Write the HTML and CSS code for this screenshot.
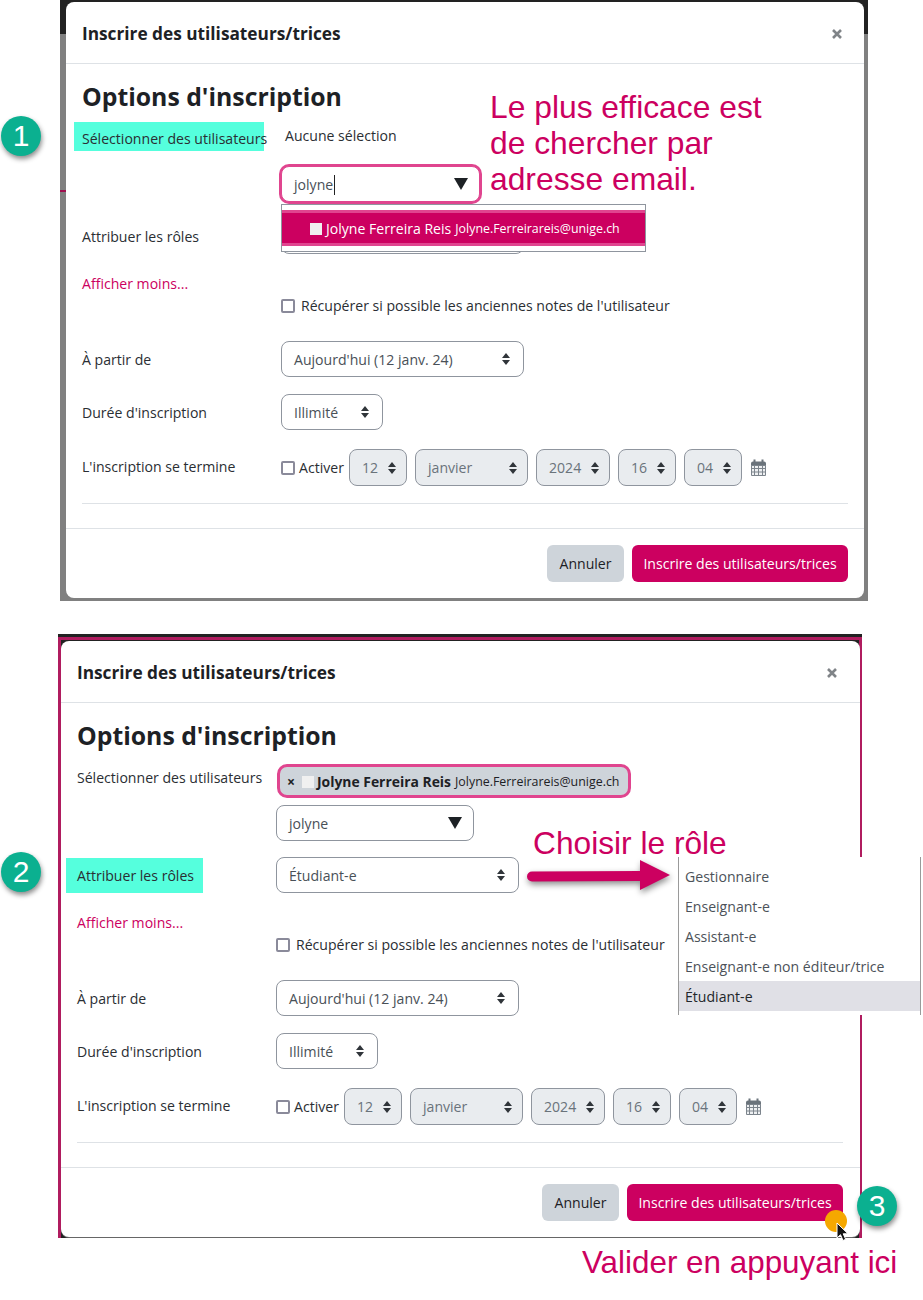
FILE: index.html
```html
<!DOCTYPE html>
<html lang="fr">
<head>
<meta charset="utf-8">
<title>Inscrire des utilisateurs/trices</title>
<link rel="stylesheet" href="styles.css">
</head>
<body>
<main class="page">
  <section class="panel panel-one">
    <div class="modal">
      <header class="modal-head">
        <h1>Inscrire des utilisateurs/trices</h1>
        <svg class="close" viewBox="0 0 10 10"><path d="M1 1 9 9M9 1 1 9"/></svg>
      </header>
      <div class="modal-body">
        <h2>Options d'inscription</h2>
        <div class="row row-users">
          <div class="label"><span class="hl hl-users">Sélectionner des utilisateurs</span></div>
          <div class="ctrl users-ctrl">
            <div class="users-top"><span class="none">Aucune sélection</span></div>
            <div class="search focus"><span>jolyne</span><i class="text-cursor"></i><i class="tri"></i></div>
          </div>
        </div>
        <div class="row row-role">
          <div class="label">Attribuer les rôles</div>
          <div class="ctrl rel">
            <div class="sel w-role"></div>
            <div class="suggest">
              <div class="suggest-item"><i class="avatar"></i><span class="name">Jolyne Ferreira Reis</span> <span class="mail">Jolyne.Ferreirareis@unige.ch</span></div>
            </div>
          </div>
        </div>
        <div class="row row-more">
          <div class="label"><a class="more">Afficher moins...</a></div>
          <div class="ctrl"></div>
        </div>
        <div class="row row-check">
          <div class="label"></div>
          <label class="ctrl check-line"><input type="checkbox">Récupérer si possible les anciennes notes de l'utilisateur</label>
        </div>
        <div class="row row-from">
          <div class="label">À partir de</div>
          <div class="ctrl"><div class="sel w-role"><span>Aujourd'hui (12 janv. 24)</span><svg class="ud" viewBox="0 0 8 12"><path d="M4 0 8 5H0ZM4 12 0 7H8Z"/></svg></div></div>
        </div>
        <div class="row row-dur">
          <div class="label">Durée d'inscription</div>
          <div class="ctrl"><div class="sel w-dur"><span>Illimité</span><svg class="ud" viewBox="0 0 8 12"><path d="M4 0 8 5H0ZM4 12 0 7H8Z"/></svg></div></div>
        </div>
        <div class="row row-end">
          <div class="label">L'inscription se termine</div>
          <div class="ctrl date-line">
            <label class="activate"><input type="checkbox">Activer</label>
            <div class="sel off w-n"><span>12</span><svg class="ud" viewBox="0 0 8 12"><path d="M4 0 8 5H0ZM4 12 0 7H8Z"/></svg></div>
            <div class="sel off w-m"><span>janvier</span><svg class="ud" viewBox="0 0 8 12"><path d="M4 0 8 5H0ZM4 12 0 7H8Z"/></svg></div>
            <div class="sel off w-y"><span>2024</span><svg class="ud" viewBox="0 0 8 12"><path d="M4 0 8 5H0ZM4 12 0 7H8Z"/></svg></div>
            <div class="sel off w-n"><span>16</span><svg class="ud" viewBox="0 0 8 12"><path d="M4 0 8 5H0ZM4 12 0 7H8Z"/></svg></div>
            <div class="sel off w-n"><span>04</span><svg class="ud" viewBox="0 0 8 12"><path d="M4 0 8 5H0ZM4 12 0 7H8Z"/></svg></div>
            <svg class="cal" viewBox="0 0 15 17"><path class="cal-top" d="M0 4.500a2 2 0 0 1 2-2h11a2 2 0 0 1 2 2V7H0Z"/><path class="cal-grid" d="M.5 6.500h14v10H.5ZM3.500 7v9M7.500 7v9M11.500 7v9M0 9.500h15M0 13h15"/><path class="cal-ring" d="M3.500 .5v3.500M11.500 .5v3.500"/></svg>
          </div>
        </div>
        <hr>
      </div>
      <footer class="modal-foot">
        <button class="btn btn-grey">Annuler</button>
        <button class="btn btn-main">Inscrire des utilisateurs/trices</button>
      </footer>
    </div>
  </section>

  <section class="panel panel-two">
    <div class="modal">
      <header class="modal-head">
        <h1>Inscrire des utilisateurs/trices</h1>
        <svg class="close" viewBox="0 0 10 10"><path d="M1 1 9 9M9 1 1 9"/></svg>
      </header>
      <div class="modal-body">
        <h2>Options d'inscription</h2>
        <div class="row row-users">
          <div class="label label-plain">Sélectionner des utilisateurs</div>
          <div class="ctrl users-ctrl">
            <div class="users-top"><div class="chip"><span class="chip-x">×</span><i class="avatar"></i><b>Jolyne Ferreira Reis</b><span class="mail">Jolyne.Ferreirareis@unige.ch</span></div></div>
            <div class="search"><span>jolyne</span><i class="tri"></i></div>
          </div>
        </div>
        <div class="row row-role">
          <div class="label"><span class="hl hl-role">Attribuer les rôles</span></div>
          <div class="ctrl"><div class="sel w-role"><span>Étudiant-e</span><svg class="ud" viewBox="0 0 8 12"><path d="M4 0 8 5H0ZM4 12 0 7H8Z"/></svg></div></div>
        </div>
        <div class="row row-more">
          <div class="label"><a class="more">Afficher moins...</a></div>
          <div class="ctrl"></div>
        </div>
        <div class="row row-check">
          <div class="label"></div>
          <label class="ctrl check-line"><input type="checkbox">Récupérer si possible les anciennes notes de l'utilisateur</label>
        </div>
        <div class="row row-from">
          <div class="label">À partir de</div>
          <div class="ctrl"><div class="sel w-role"><span>Aujourd'hui (12 janv. 24)</span><svg class="ud" viewBox="0 0 8 12"><path d="M4 0 8 5H0ZM4 12 0 7H8Z"/></svg></div></div>
        </div>
        <div class="row row-dur">
          <div class="label">Durée d'inscription</div>
          <div class="ctrl"><div class="sel w-dur"><span>Illimité</span><svg class="ud" viewBox="0 0 8 12"><path d="M4 0 8 5H0ZM4 12 0 7H8Z"/></svg></div></div>
        </div>
        <div class="row row-end">
          <div class="label">L'inscription se termine</div>
          <div class="ctrl date-line">
            <label class="activate"><input type="checkbox">Activer</label>
            <div class="sel off w-n"><span>12</span><svg class="ud" viewBox="0 0 8 12"><path d="M4 0 8 5H0ZM4 12 0 7H8Z"/></svg></div>
            <div class="sel off w-m"><span>janvier</span><svg class="ud" viewBox="0 0 8 12"><path d="M4 0 8 5H0ZM4 12 0 7H8Z"/></svg></div>
            <div class="sel off w-y"><span>2024</span><svg class="ud" viewBox="0 0 8 12"><path d="M4 0 8 5H0ZM4 12 0 7H8Z"/></svg></div>
            <div class="sel off w-n"><span>16</span><svg class="ud" viewBox="0 0 8 12"><path d="M4 0 8 5H0ZM4 12 0 7H8Z"/></svg></div>
            <div class="sel off w-n"><span>04</span><svg class="ud" viewBox="0 0 8 12"><path d="M4 0 8 5H0ZM4 12 0 7H8Z"/></svg></div>
            <svg class="cal" viewBox="0 0 15 17"><path class="cal-top" d="M0 4.500a2 2 0 0 1 2-2h11a2 2 0 0 1 2 2V7H0Z"/><path class="cal-grid" d="M.5 6.500h14v10H.5ZM3.500 7v9M7.500 7v9M11.500 7v9M0 9.500h15M0 13h15"/><path class="cal-ring" d="M3.500 .5v3.500M11.500 .5v3.500"/></svg>
          </div>
        </div>
        <hr>
      </div>
      <footer class="modal-foot">
        <button class="btn btn-grey">Annuler</button>
        <button class="btn btn-main">Inscrire des utilisateurs/trices</button>
      </footer>
    </div>
  </section>

  <div class="badge badge-1">1</div>
  <div class="badge badge-2">2</div>
  <div class="badge badge-3">3</div>

  <p class="note note-1">Le plus efficace est<br>de chercher par<br>adresse email.</p>
  <p class="note note-2">Choisir le rôle</p>
  <p class="note note-3">Valider en appuyant ici</p>

  <svg class="arrow" viewBox="0 0 150 40"><path d="M5 11.500 113 11V0l30 15L113 30V21L5 21.500a5 5 0 0 1 0-10Z"/></svg>

  <ul class="roles">
    <li>Gestionnaire</li>
    <li>Enseignant-e</li>
    <li>Assistant-e</li>
    <li>Enseignant-e non éditeur/trice</li>
    <li class="current">Étudiant-e</li>
  </ul>

  <i class="click-dot"></i>
  <svg class="pointer" viewBox="0 0 12 20"><path d="M1 1v15l3.500-3.300L7 18.500l2.700-1.200-2.500-5.500H12Z"/></svg>
</main>
</body>
</html>
```
FILE: styles.css
```css
* { box-sizing: border-box; }

html, body { margin: 0; padding: 0; background: #fff; }

body {
  font-family: "Open Sans", "Noto Sans", sans-serif;
  font-size: 14.08px;
  line-height: 24px;
  color: #2a2e33;
}

.page {
  position: relative;
  width: 923px;
  height: 1300px;
  overflow: hidden;
}

/* Screenshot panels */
.panel { display: flex; }

.panel-one {
  width: 808px;
  height: 601px;
  margin-left: 60px;
  padding: 2px 4px 3px 6px;
  background:
    linear-gradient(#a0104f, #a0104f) 0 190px / 6px 2px no-repeat,
    linear-gradient(#222 0 34px, #808080 34px);
}

.panel-two {
  width: 804px;
  height: 604px;
  margin-top: 33px;
  margin-left: 58px;
  padding: 7px 2px 1px 3px;
  background:
    linear-gradient(#b01c5f, #b01c5f) 0 3px / 100% 3px no-repeat,
    linear-gradient(#b01c5f, #b01c5f) 0 3px / 3px 100% no-repeat,
    linear-gradient(#b01c5f, #b01c5f) 100% 3px / 3px 100% no-repeat,
    #222;
}

.panel-two .modal { box-shadow: 0 1px 0 #666; }
.panel-two .modal-head { padding-right: 23px; }
.panel-two .modal-foot { padding-right: 17px; }
.panel-two hr { margin-right: 1px; }

.modal {
  flex: 1;
  display: flex;
  flex-direction: column;
  background: #fff;
  border-radius: 8px;
}

.modal-head {
  height: 62px;
  flex: none;
  display: flex;
  align-items: center;
  justify-content: space-between;
  padding: 0 22px 0 16px;
  border-bottom: 1px solid #dee2e6;
}

h1 {
  margin: 0;
  padding-top: 2px;
  font-size: 17.25px;
  font-weight: 700;
  line-height: 24px;
  color: #1d2125;
}

.close { width: 10px; height: 10px; margin-top: 2px; }
.close path { stroke: #808488; stroke-width: 2.600; fill: none; }

.modal-body { flex: 1; padding: 0 16px; }

h2 {
  margin: 18px 0 15px;
  font-size: 24.8px;
  font-weight: 700;
  line-height: 29px;
  color: #1d2125;
}

.row {
  display: grid;
  grid-template-columns: 199px 1fr;
}

.label { white-space: nowrap; }
.label-plain { padding-top: 1px; }

.row-users { height: 92px; }
.row-role { height: 36px; margin-bottom: 18px; }
.row-role .label { line-height: 38px; }
.row-more { height: 24px; }
.row-check { height: 20px; margin-top: -2px; margin-bottom: 27px; }
.row-from { height: 36px; margin-bottom: 17px; }
.row-dur { height: 36px; margin-bottom: 19px; }
.row-end { height: 37px; }
.row-from .label, .row-dur .label { line-height: 38px; }
.row-end .label { line-height: 36px; }

.hl {
  display: block;
  background: #55ffdd;
}
.hl-users { width: 190px; height: 29px; margin: -4px 0 0 -8px; padding-left: 8px; line-height: 34px; }
.hl-role { width: 137px; height: 35px; margin: 1px 0 0 -11px; padding-left: 11px; line-height: 35px; }

.users-ctrl { display: flex; flex-direction: column; }
.users-top { height: 40px; }
.none { display: block; padding-left: 4px; line-height: 20px; }

.search {
  width: 198px;
  height: 36px;
  display: flex;
  align-items: center;
  padding: 2px 11px 0 12px;
  color: #495057;
  background: #fff;
  border: 1px solid #8f959e;
  border-radius: 8px;
}
.search.focus { width: 199px; border-color: #e0458f; box-shadow: 0 0 0 2px #e0458f; }
.text-cursor { width: 1px; height: 20px; margin-left: 1px; background: #222; }
.tri {
  margin-left: auto;
  margin-top: -2px;
  width: 0;
  height: 0;
  border-left: 7px solid transparent;
  border-right: 7px solid transparent;
  border-top: 12px solid #1d2125;
}

.rel { position: relative; }

.sel {
  height: 36px;
  display: flex;
  align-items: center;
  justify-content: space-between;
  padding: 2px 13px 0 12px;
  color: #495057;
  background: #fff;
  border: 1px solid #8f959e;
  border-radius: 8px;
  white-space: nowrap;
}
.sel.off { height: 37px; color: #6a737b; background: #e9ecef; padding: 0 10px 0 12px; }
.ud { width: 8px; height: 12px; flex: none; margin-top: -2px; }
.sel.off .ud { margin-top: 0; }
.ud path { fill: #30353a; }

.w-role { width: 243px; }
.w-dur { width: 102px; }
.w-n { width: 58px; }
.w-m { width: 113px; }
.w-y { width: 74px; }

.suggest {
  position: absolute;
  top: -14px;
  left: 0;
  width: 365px;
  height: 48px;
  padding-top: 5px;
  background: #fff;
  border: 1px solid #8f959e;
}
.suggest-item {
  height: 36px;
  padding: 2px 0 0 28px;
  display: flex;
  align-items: center;
  gap: 4px;
  color: #fff;
  background: #cc0060;
  border-top: 3px solid #e0458f;
  border-bottom: 3px solid #e0458f;
  white-space: nowrap;
}

.avatar {
  display: inline-block;
  flex: none;
  width: 12px;
  height: 12px;
  background: #f0f0f0;
}

.mail { font-size: 12.4px; }

.more { color: #cc0060; }

.check-line, .activate {
  display: flex;
  align-items: center;
  white-space: nowrap;
}

input[type="checkbox"] {
  appearance: none;
  flex: none;
  width: 14px;
  height: 14px;
  margin: 0 6px 0 0;
  background: #fff;
  border: 2px solid #8a8a9a;
  border-radius: 2px;
}

.date-line { display: flex; align-items: center; gap: 8px; }
.activate { margin-right: -4px; width: 64px; }
.activate input { margin-right: 4px; }

.cal { width: 15px; height: 17px; margin-left: 1px; margin-top: -1px; }
.cal-top { fill: #6a737b; }
.cal-grid { stroke: #7c848c; stroke-width: 1; fill: #eef0f2; }
.cal-ring { stroke: #6a737b; stroke-width: 2; fill: none; }

hr {
  margin: 17px 0 0;
  border: 0;
  border-top: 1px solid #dee2e6;
}

.modal-foot {
  height: 70px;
  flex: none;
  display: flex;
  justify-content: flex-end;
  gap: 8px;
  padding: 16px 16px 17px;
  border-top: 1px solid #dee2e6;
}

.btn {
  height: 37px;
  padding: 0;
  font: inherit;
  border: 0;
  border-radius: 6px;
}
.btn-grey { width: 77px; color: #1d2125; background: #ced4da; }
.btn-main { width: 216px; color: #fff; background: #cc0060; }

.chip {
  width: 354px;
  height: 34px;
  margin: -1px 0 0 1px;
  display: flex;
  align-items: center;
  padding: 1px 0 0 7px;
  background: #ced4da;
  border: 3px solid #e0458f;
  border-radius: 10px;
  white-space: nowrap;
  color: #1d2125;
}
.chip-x { width: 15px; font-weight: 700; }
.chip .avatar { margin-right: 3px; }
.chip b { margin-right: 4px; font-size: 13.9px; }

/* Annotations on top of the screenshots */
.badge {
  position: absolute;
  width: 40px;
  height: 40px;
  color: #fff;
  font: 30px/40px "Liberation Sans", Arial, sans-serif;
  text-align: center;
  background: #0bb090;
  border-radius: 50%;
  box-shadow: 1px 3px 5px rgba(0, 0, 0, 0.45);
}
.badge-1 { left: 1px; top: 116px; }
.badge-2 { left: 1px; top: 852px; }
.badge-3 { left: 857px; top: 1186px; }

.note {
  position: absolute;
  margin: 0;
  color: #cc0060;
  font-family: "Liberation Sans", Arial, sans-serif;
  white-space: nowrap;
}
.note-1 { left: 490px; top: 89px; font-size: 31.8px; line-height: 36px; }
.note-2 { left: 533px; top: 825px; font-size: 31.7px; line-height: 36px; }
.note-3 { left: 582px; top: 1245px; font-size: 31.4px; line-height: 36px; }

.arrow {
  position: absolute;
  left: 527px;
  top: 860px;
  width: 150px;
  height: 40px;
  filter: drop-shadow(1px 3px 3px rgba(0, 0, 0, 0.45));
}
.arrow path { fill: #cc0060; }

.roles {
  position: absolute;
  left: 678px;
  top: 857px;
  width: 243px;
  height: 158px;
  margin: 0;
  padding: 4px 0;
  list-style: none;
  background: #fff;
  border-left: 1px solid #9a9a9a;
  border-right: 1px solid #9a9a9a;
}
.roles li { height: 30px; padding-left: 6px; line-height: 32px; color: #4c5259; }
.roles .current { color: #22262a; background: #e0e0e6; }

.click-dot {
  position: absolute;
  left: 825px;
  top: 1210px;
  width: 22px;
  height: 22px;
  background: #f5a800;
  border-radius: 50%;
}

.pointer {
  position: absolute;
  left: 836px;
  top: 1221px;
  width: 12px;
  height: 22px;
}
.pointer path { fill: #111; stroke: #fff; stroke-width: 1; }
```
